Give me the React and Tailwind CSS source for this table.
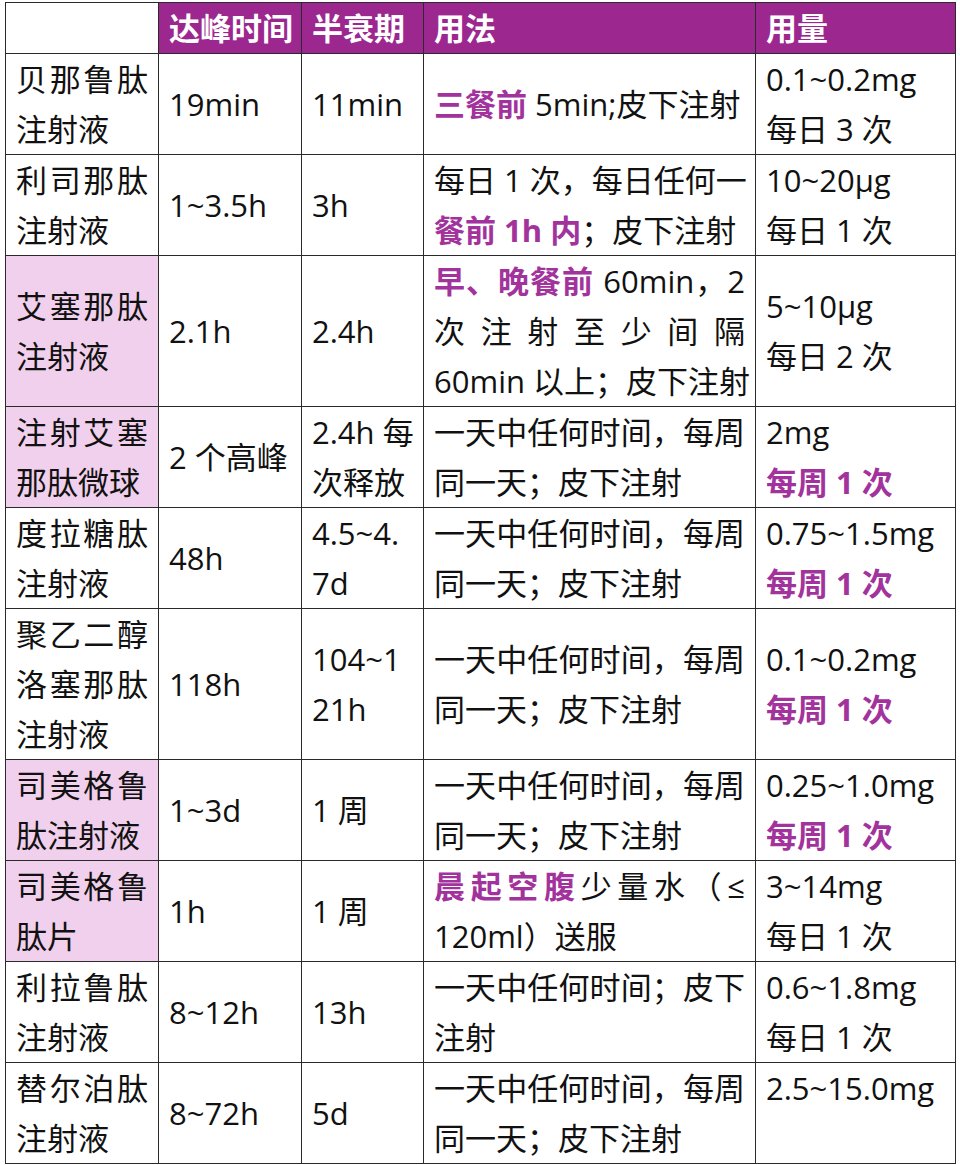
import React from "react";

const P = ({ children }) => <span className="font-bold text-[#a2339c]">{children}</span>;

// one rendered line; every line except the last of a cell is spread to the full width
const Lines = ({ lines, justify = true }) => (
    <>
        {lines.map((l, i) => (
            <div
                key={i}
                className={
                    "whitespace-nowrap " +
                    (justify && i < lines.length - 1 ? "text-justify [text-align-last:justify]" : "text-left")
                }
            >
                {l}
            </div>
        ))}
    </>
);

const rows = [
    {
        name: ["贝那鲁肽", "注射液"],
        peak: "19min",
        half: ["11min"],
        usage: [<><P>三餐前</P> 5min;皮下注射</>],
        dose: ["0.1~0.2mg", "每日 3 次"],
    },
    {
        name: ["利司那肽", "注射液"],
        peak: "1~3.5h",
        half: ["3h"],
        usage: ["每日 1 次，每日任何一", <><P>餐前 1h 内</P>；皮下注射</>],
        dose: ["10~20μg", "每日 1 次"],
    },
    {
        name: ["艾塞那肽", "注射液"],
        pink: true,
        peak: "2.1h",
        half: ["2.4h"],
        usage: [<><P>早、晚餐前</P> 60min，2</>, "次注射至少间隔", "60min 以上；皮下注射"],
        dose: ["5~10μg", "每日 2 次"],
    },
    {
        name: ["注射艾塞", "那肽微球"],
        pink: true,
        peak: "2 个高峰",
        half: ["2.4h 每", "次释放"],
        usage: ["一天中任何时间，每周", "同一天；皮下注射"],
        dose: ["2mg", <P>每周 1 次</P>],
    },
    {
        name: ["度拉糖肽", "注射液"],
        peak: "48h",
        half: ["4.5~4.", "7d"],
        usage: ["一天中任何时间，每周", "同一天；皮下注射"],
        dose: ["0.75~1.5mg", <P>每周 1 次</P>],
    },
    {
        name: ["聚乙二醇", "洛塞那肽", "注射液"],
        peak: "118h",
        half: ["104~1", "21h"],
        usage: ["一天中任何时间，每周", "同一天；皮下注射"],
        dose: ["0.1~0.2mg", <P>每周 1 次</P>],
    },
    {
        name: ["司美格鲁", "肽注射液"],
        pink: true,
        peak: "1~3d",
        half: ["1 周"],
        usage: ["一天中任何时间，每周", "同一天；皮下注射"],
        dose: ["0.25~1.0mg", <P>每周 1 次</P>],
    },
    {
        name: ["司美格鲁", "肽片"],
        pink: true,
        peak: "1h",
        half: ["1 周"],
        usage: [<><P>晨起空腹</P>少量水（≤</>, "120ml）送服"],
        dose: ["3~14mg", "每日 1 次"],
    },
    {
        name: ["利拉鲁肽", "注射液"],
        peak: "8~12h",
        half: ["13h"],
        usage: ["一天中任何时间；皮下", "注射"],
        dose: ["0.6~1.8mg", "每日 1 次"],
    },
    {
        name: ["替尔泊肽", "注射液"],
        peak: "8~72h",
        half: ["5d"],
        usage: ["一天中任何时间，每周", "同一天；皮下注射"],
        dose: ["2.5~15.0mg", "\u00a0"],
    },
];

const td = "border border-[#2a2a2a] px-[10px] py-0 align-middle";
const th = td + " bg-[#9b278f] whitespace-nowrap";

export default function App() {
    return (
        <div
            className="bg-white w-[960px] h-[1165px] pt-[2px] pl-[5px] text-[31px] leading-[50px] text-[#111]"
            style={{ fontFamily: '"Open Sans", "Noto Sans CJK SC", sans-serif' }}
        >
            <table className="border-collapse table-fixed w-[950px]">
                <colgroup>
                    <col className="w-[153px]" />
                    <col className="w-[143px]" />
                    <col className="w-[122px]" />
                    <col className="w-[332px]" />
                    <col className="w-[200px]" />
                </colgroup>
                <thead>
                    <tr className="font-bold text-white">
                        <td className={td + " bg-white"}></td>
                        <td className={th + " pr-0"}>达峰时间</td>
                        <td className={th}>半衰期</td>
                        <td className={th}>用法</td>
                        <td className={th}>用量</td>
                    </tr>
                </thead>
                <tbody>
                    {rows.map((r, i) => (
                        <tr key={i}>
                            <td className={td + (r.pink ? " bg-[#f0d0ec]" : "")}>
                                <Lines lines={r.name} />
                            </td>
                            <td className={td + " whitespace-nowrap"}>{r.peak}</td>
                            <td className={td}>
                                <Lines lines={r.half} justify={false} />
                            </td>
                            <td className={td}>
                                <Lines lines={r.usage} />
                            </td>
                            <td className={td}>
                                <Lines lines={r.dose} justify={false} />
                            </td>
                        </tr>
                    ))}
                </tbody>
            </table>
        </div>
    );
}
